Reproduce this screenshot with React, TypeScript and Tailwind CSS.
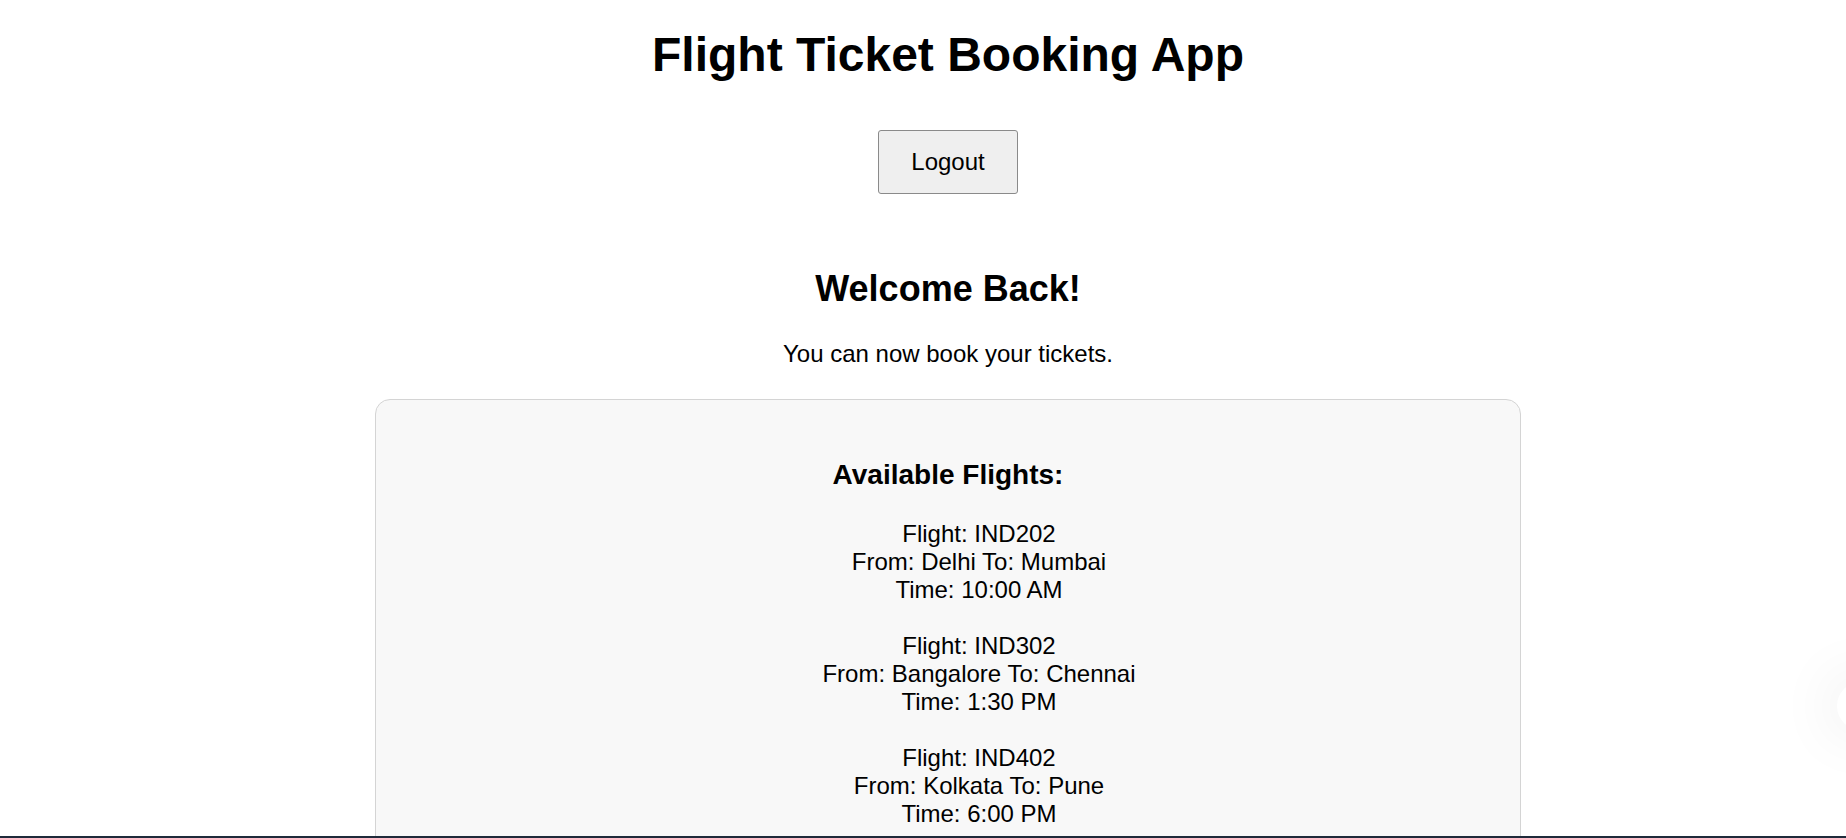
import React from "react";

const flights = [
  { code: "IND202", from: "Delhi", to: "Mumbai", time: "10:00 AM" },
  { code: "IND302", from: "Bangalore", to: "Chennai", time: "1:30 PM" },
  { code: "IND402", from: "Kolkata", to: "Pune", time: "6:00 PM" },
];

function FlightItem({ code, from, to, time }: (typeof flights)[number]) {
  return (
    <li className="flex flex-col items-center text-[24px] leading-[28px]">
      <p>Flight: {code}</p>
      <p>
        From: {from} To: {to}
      </p>
      <p>Time: {time}</p>
    </li>
  );
}

export default function App() {
  return (
    <div
      className="relative flex h-[838px] w-full flex-col overflow-hidden bg-white text-black"
      style={{ fontFamily: '"Liberation Sans", Arial, sans-serif' }}
    >
      <div className="flex-1 overflow-hidden">
        <div className="flex w-[1896px] flex-col items-center">
          <h1 className="mt-[27px] text-[48px] font-bold leading-[55px]">
            Flight Ticket Booking App
          </h1>

          <button className="mt-[48px] h-[64px] w-[140px] rounded-[3px] border border-[#8a8a8a] bg-[#efefef] text-[24px] leading-[28px]">
            Logout
          </button>

          <h2 className="mt-[74px] text-[36px] font-bold leading-[41px]">
            Welcome Back!
          </h2>
          <p className="mt-[31px] text-[24px] leading-[28px]">
            You can now book your tickets.
          </p>

          <div className="mt-[31px] flex w-[1146px] flex-col items-center rounded-[15px] border border-[#d4d4d4] bg-[#f8f8f8] pt-[59px] pb-[40px]">
            <h3 className="text-[28px] font-bold leading-[32px]">
              Available Flights:
            </h3>
            <ul className="mt-[29px] flex w-full flex-col gap-[28px] pl-[62px]">
              {flights.map((f) => (
                <FlightItem key={f.code} {...f} />
              ))}
            </ul>
          </div>
        </div>
      </div>

      {/* floating widget peeking in from the right edge */}
      <div className="absolute left-[1837px] top-[682px] h-[48px] w-[48px] rounded-full bg-white shadow-[0_0_60px_10px_rgba(0,0,0,0.06)]" />

      <div className="h-[2px] w-full bg-[#1f2a3a]" />
    </div>
  );
}
